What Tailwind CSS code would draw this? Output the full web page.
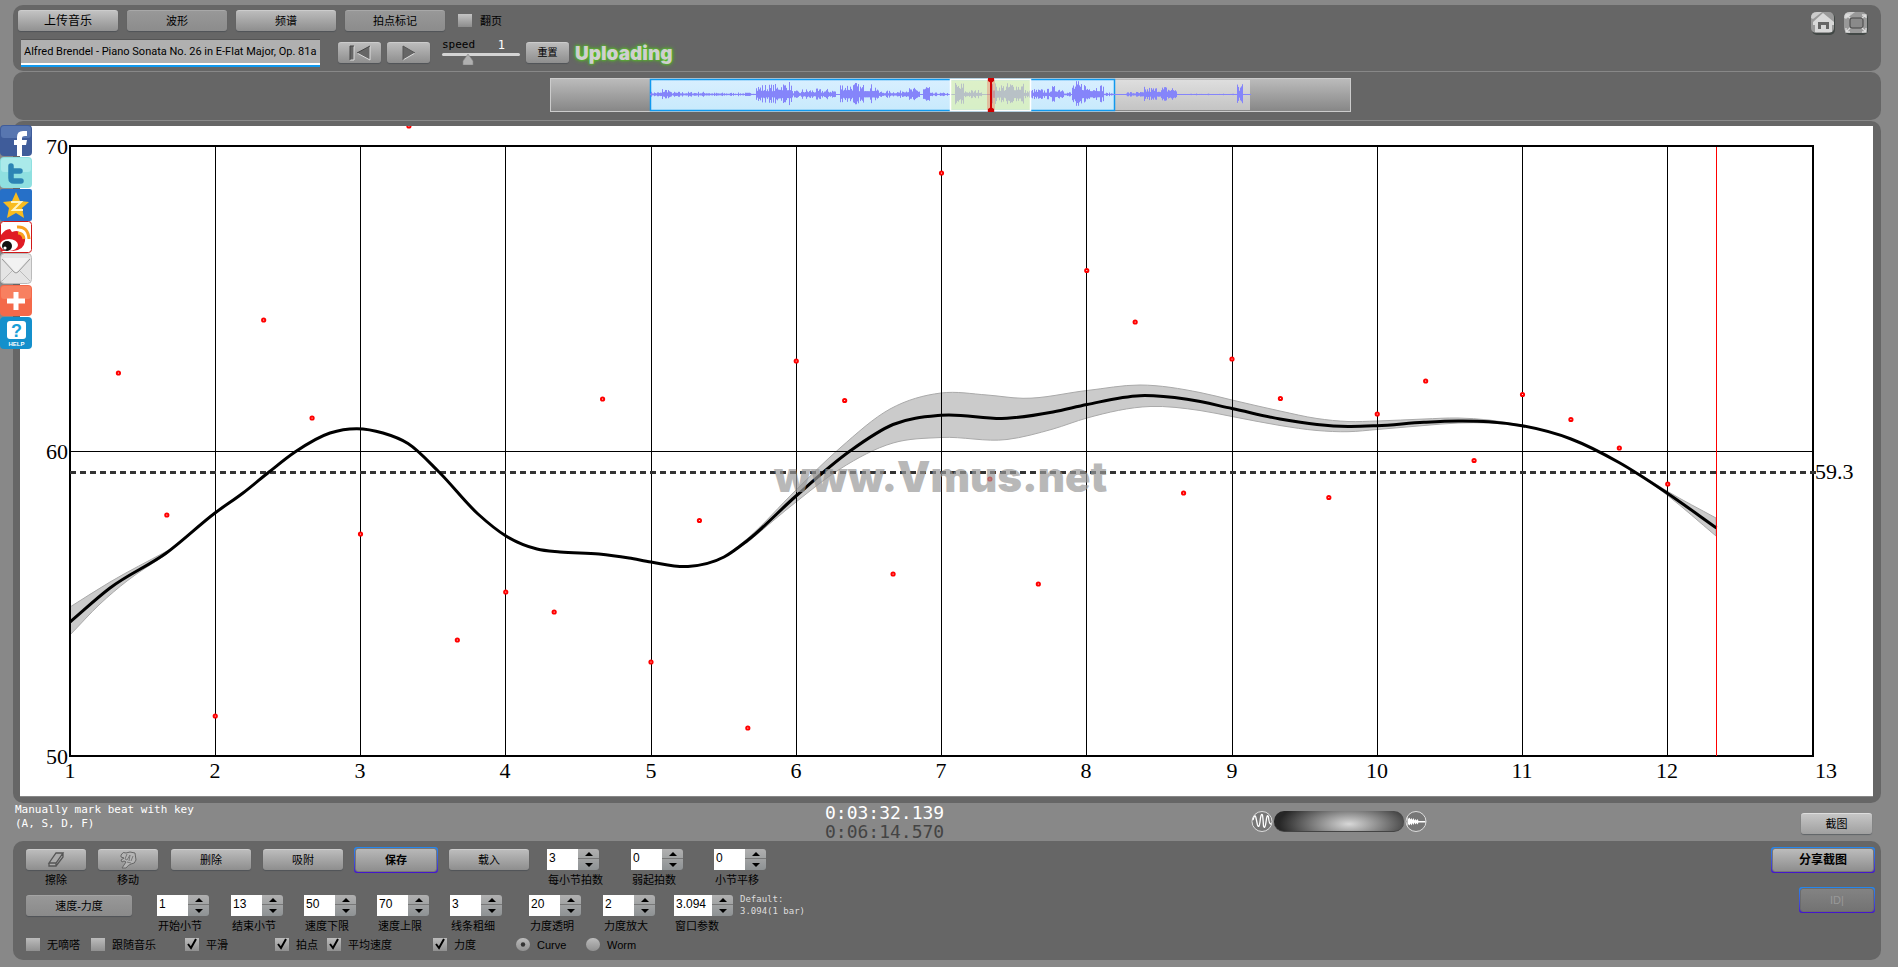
<!DOCTYPE html>
<html lang="zh-CN">
<head>
<meta charset="utf-8">
<title>Vmus.net</title>
<script src="https://cdn.jsdelivr.net/npm/@tailwindcss/browser@4"></script>
</head>
<body class="relative min-h-screen bg-[#888888] pl-[13px] pr-[17px] pt-[5px] font-['Liberation_Sans','Noto_Sans_CJK_SC',sans-serif] text-[11px] leading-[14px] text-black">

<!-- Toolbar -->
<header class="flex h-[66px] justify-between rounded-[10px] bg-[#666666] pl-[5px] pr-[12px] pt-[5px]">
  <div class="flex flex-col gap-[8px]">
    <div class="flex items-center gap-[9px]">
      <button class="h-[21px] w-[100px] rounded-[3px] border-t border-[#cccccc] bg-linear-to-b from-[#c2c2c2] to-[#919191] text-[12px] shadow-[0_1px_1px_#505458]">上传音乐</button>
      <button class="h-[21px] w-[100px] rounded-[3px] border-t border-[#a8a8a8] bg-linear-to-b from-[#989898] to-[#8c8c8c] shadow-[0_1px_1px_#505458]">波形</button>
      <button class="h-[21px] w-[100px] rounded-[3px] border-t border-[#cccccc] bg-linear-to-b from-[#bcbcbc] to-[#8e8e8e] shadow-[0_1px_1px_#505458]">频谱</button>
      <button class="h-[21px] w-[100px] rounded-[3px] border-t border-[#a8a8a8] bg-linear-to-b from-[#989898] to-[#8c8c8c] shadow-[0_1px_1px_#505458]">拍点标记</button>
      <label class="ml-[4px] flex items-center gap-[8px]"><input type="checkbox" class="h-[13px] w-[14px] appearance-none bg-linear-to-b from-[#c4c4c4] to-[#8c8c8c]">翻页</label>
    </div>
    <div class="flex items-start pl-[3px]">
      <div class="w-[299px] border-b-2 border-[#1199ee]">
        <input aria-label="曲目" value="Alfred Brendel - Piano Sonata No. 26 in E-Flat Major, Op. 81a" class="block h-[26px] w-full border-b-2 border-t border-b-white border-t-[#555555] bg-[#b0b0b0] px-[3px] font-['Roboto',sans-serif] text-[11px]">
      </div>
      <button aria-label="回到开头" class="ml-[18px] mt-[3px] flex h-[21px] w-[43px] items-center justify-center rounded-[3px] border-t border-[#cccccc] bg-linear-to-b from-[#bcbcbc] to-[#8e8e8e] shadow-[0_1px_1px_#505458]">
        <svg class="h-[16px] w-[22px]" viewBox="0 0 22 16"><path d="M1 1h4v14H1zM21 1v14L8 8z" fill="#666"/><path d="M5 1v14H1M21 1v14L8 8" fill="none" stroke="#ddd"/><path d="M1 15V1h4M8 8l13-7" fill="none" stroke="#444"/></svg>
      </button>
      <button aria-label="播放" class="ml-[6px] mt-[3px] flex h-[21px] w-[43px] items-center justify-center rounded-[3px] border-t border-[#cccccc] bg-linear-to-b from-[#bcbcbc] to-[#8e8e8e] shadow-[0_1px_1px_#505458]">
        <svg class="h-[16px] w-[14px]" viewBox="0 0 14 16"><path d="M1 1v14l12-7z" fill="#666"/><path d="M1 15l12-7" fill="none" stroke="#ddd"/><path d="M1 15V1l12 7" fill="none" stroke="#555"/></svg>
      </button>
      <div class="ml-[12px] w-[78px] font-['DejaVu_Sans_Mono',monospace]">
        <div class="flex h-[12px] items-center justify-between pr-[15px]"><label for="speed">speed</label><span class="text-[12px] text-white">1</span></div>
        <div class="relative h-[14px]">
          <input id="speed" type="range" min="0" max="3" value="1" class="absolute inset-x-0 top-[2px] h-[3px] w-full appearance-none rounded bg-[#d4d4d4] [&::-webkit-slider-thumb]:appearance-none">
          <svg class="pointer-events-none absolute left-[20px] top-[3px] h-[11px] w-[12px]" viewBox="0 0 12 11"><path d="M6 0l5 7v4H1V7z" fill="#b0b0b0" stroke="#888" stroke-width=".6"/></svg>
        </div>
      </div>
      <button class="ml-[6px] mt-[3px] h-[21px] w-[43px] rounded-[3px] border-t border-[#cccccc] bg-linear-to-b from-[#bcbcbc] to-[#8e8e8e] text-[10px] shadow-[0_1px_1px_#505458]">重置</button>
      <span class="ml-[6px] mt-[5px] font-['Inter',sans-serif] text-[19px] font-black leading-[20px] text-[#cfcfcf] [text-shadow:0_0_2px_#55cc22,0_0_3px_#55bb22,0_0_5px_#55bb22]">Uploading</span>
    </div>
  </div>
  <nav class="flex gap-[7px] pt-[1px]">
    <a href="#" aria-label="主页"><svg class="h-[25px] w-[26px]" viewBox="0 0 26 25"><rect x="2" y="2" width="23" height="22" rx="5" fill="#424846"/><rect x="1" y="1" width="23" height="21" rx="5" fill="#999"/><path d="M1 7Q1 1 7 1h5L3 8z" fill="#ccc"/><path d="M13 2L3 11v3h2v7h17v-7h2v-3z" fill="#d8d8d8"/><path d="M8 11h11v7h-3v-4h-5v4H8z" fill="#666"/></svg></a>
    <a href="#" aria-label="全屏"><svg class="h-[25px] w-[26px]" viewBox="0 0 26 25"><rect x="2" y="2" width="23" height="22" rx="5" fill="#424846"/><rect x="1" y="1" width="23" height="21" rx="5" fill="#999"/><path d="M1 7Q1 1 7 1h5L3 8z" fill="#ccc"/><rect x="7" y="7" width="13" height="10" rx="2" fill="#8a8a8a" stroke="#444"/><path d="M3 7V4h4M19 4h4v3M23 17v4h-4M7 21H3v-4M3 4l4 3M23 4l-4 3M23 21l-4-4M3 21l4-4" fill="none" stroke="#ddd" stroke-width="1.300"/></svg></a>
  </nav>
</header>

<!-- Timeline overview -->
<section aria-label="时间轴" class="mt-px flex h-[48px] justify-center rounded-[10px] bg-[#666666] pl-[8px] pt-[6px]">
  <svg id="timeline" class="h-[35px] w-[802px]" viewBox="0 0 802 35">
    <defs>
      <linearGradient id="gd" x2="0" y2="1"><stop stop-color="#bcbcbc"/><stop offset="1" stop-color="#868686"/></linearGradient>
      <linearGradient id="gl" x2="0" y2="1"><stop stop-color="#dedede"/><stop offset="1" stop-color="#c4c4c4"/></linearGradient>
      <linearGradient id="gb" x2="0" y2="1"><stop stop-color="#d8efff"/><stop offset="1" stop-color="#c8eafc"/></linearGradient>
    </defs>
    <rect x=".5" y=".5" width="800" height="33" fill="url(#gd)" stroke="#ccc"/>
    <rect x="564" y="2" width="136" height="30" fill="url(#gl)"/>
    <rect x="100.500" y="1.500" width="464" height="31" fill="url(#gb)" stroke="#1199ee" stroke-width="1.500"/>
    <path id="wave" fill="none" stroke="#8585fa"/>
    <rect x="400.500" y="1.500" width="80" height="31" fill="#e1f29a" fill-opacity=".55" stroke="#fff" stroke-width="1.500"/>
    <rect x="437" y="1" width="8" height="33" fill="#f00" opacity=".2"/>
    <path d="M441 1v33" stroke="#d00000" stroke-width="2"/><path d="M438 0h6v3l-3 2-3-2zM438 34h6v-3l-3-2-3 2z" fill="#d00000"/>
  </svg>
</section>

<!-- Tempo chart -->
<main class="mt-px rounded-[10px] bg-[#666666] pb-[6px] pl-[7px] pr-[8px] pt-[5px]">
  <svg id="chart" class="block w-full border-b border-[#888888] bg-white font-['Liberation_Serif',serif] text-[22px]" viewBox="20 126 1853 670" role="img" aria-label="速度曲线">
    <path id="band" fill="#cbcbcb" stroke="#aaa"/>
    <g id="grid" stroke="#000" stroke-width="1"></g>
    <rect x="70" y="146" width="1743" height="610" fill="none" stroke="#000" stroke-width="2"/>
    <path d="M70 472.500H1820" stroke="#333" stroke-width="3" stroke-dasharray="6 4"/>
    <path id="curve" fill="none" stroke="#000" stroke-width="3"/>
    <g id="dots" fill="#fff" stroke="#f00" stroke-width="2"></g>
    <text x="774" y="492" class="font-['Inter',sans-serif] text-[42px] font-black" fill="#999" fill-opacity=".7">www.Vmus.net</text>
    <path d="M1716.500 147v609" stroke="#f00"/>
    <g text-anchor="end"><text x="68" y="154">70</text><text x="68" y="459">60</text><text x="68" y="764">50</text></g>
    <text x="1815" y="479">59.3</text>
    <g id="ticks" text-anchor="middle"></g>
  </svg>
</main>

<!-- Status strip -->
<section class="flex h-[38px] justify-between pl-[2px] pr-[9px]">
  <p class="w-[810px] font-['DejaVu_Sans_Mono',monospace] text-[11px] leading-[14px] text-white">Manually mark beat with key<br>(A, S, D, F)</p>
  <div class="w-[426px] shrink-0 font-['DejaVu_Sans_Mono',monospace] text-[18px] leading-[19px]"><div class="text-white">0:03:32.139</div><div class="text-[#444444]">0:06:14.570</div></div>
  <div class="flex flex-1 items-start pt-[7px]">
    <svg class="h-[23px] w-[22px]" viewBox="0 0 22 23"><circle cx="11" cy="11.500" r="10" fill="#777" stroke="#ddd"/><path d="M2 10Q4 3 5 8L6.500 15Q8 19 9 12Q10 2 11.500 5Q12 8 12.500 16Q14 20 15 12Q16 3 17.500 7Q18 14 20 14" fill="none" stroke="#fff" stroke-width="1.300"/></svg>
    <div class="mx-px mt-px h-[21px] w-[130px] rounded-[10px] border-b border-[#444444] bg-[radial-gradient(ellipse_70px_26px_at_75px_13px,#d8d8d8,#777777_55%,#262626)]"></div>
    <svg class="h-[23px] w-[22px]" viewBox="0 0 22 23"><circle cx="11" cy="11.500" r="10" fill="#777" stroke="#ddd"/><path d="M2.500 6l1 3 1-1.500 1 2 1-1.500 1 2 1-2 1 2.500 1-1.500 1 1.500 1-1.500 1 2h7v1.500h-7l-1 2-1-1.500-1 1.500-1-2-1 2.500-1-2-1 2.500-1-2-1 2-1-1.500-1 3z" fill="#fff"/></svg>
  </div>
  <button class="mt-[10px] h-[21px] w-[71px] rounded-[3px] border-t border-[#dddddd] bg-linear-to-b from-[#c6c6c6] to-[#a0a0a0] shadow-[0_1px_1px_#606468]">截图</button>
</section>

<!-- Controls -->
<section class="flex justify-between rounded-[10px] bg-[#666666] pb-[9px] pl-[13px] pr-[6px] pt-[6px]">
  <div class="pt-[2px]">
    <div id="row1" class="flex h-[46px]">
      <div class="w-[60px] text-center"><button aria-labelledby="l-erase" class="mb-[3px] flex h-[21px] w-[60px] items-center justify-center rounded-[3px] border-t border-[#cccccc] bg-linear-to-b from-[#bcbcbc] to-[#8e8e8e] shadow-[0_1px_1px_#505458]"><svg class="h-[16px] w-[18px]" viewBox="0 0 18 16"><path d="M2 11L9 1h7l-7 10zM2 11v3h7v-3M9 14l7-9V1M2 11h7" fill="#aaa" stroke="#555" stroke-width="1.300"/></svg></button><span id="l-erase">擦除</span></div>
      <div class="ml-[12px] w-[60px] text-center"><button aria-labelledby="l-move" class="mb-[3px] flex h-[21px] w-[60px] items-center justify-center rounded-[3px] border-t border-[#cccccc] bg-linear-to-b from-[#bcbcbc] to-[#8e8e8e] shadow-[0_1px_1px_#505458]"><svg class="h-[18px] w-[18px]" viewBox="0 0 18 18"><path d="M2 4Q4 0 7 2l4-1 5 1 1 7q-1 4-5 4-3 1-5 4H3l4-6-2-1-2 1-1-2 3-2-3-1z" fill="#b4b4b4" stroke="#666"/><path d="M8 3l-2 5 2 1 3-5M11 4l-1 6M14 5l-2 5M8 11l4 1" fill="none" stroke="#777"/></svg></button><span id="l-move">移动</span></div>
      <button class="ml-[13px] h-[21px] w-[80px] rounded-[3px] border-t border-[#cccccc] bg-linear-to-b from-[#bcbcbc] to-[#8e8e8e] shadow-[0_1px_1px_#505458]">删除</button>
      <button class="ml-[12px] h-[21px] w-[80px] rounded-[3px] border-t border-[#cccccc] bg-linear-to-b from-[#bcbcbc] to-[#8e8e8e] shadow-[0_1px_1px_#505458]">吸附</button>
      <div class="-mt-[2px] ml-[11px] h-[26px] w-[84px] rounded-[3px] bg-linear-to-b from-[#2288ee] to-[#4411cc] p-px"><button class="h-full w-full rounded-[3px] border border-[#777777] bg-linear-to-b from-[#b8b8b8] to-[#8e8e8e] font-bold">保存</button></div>
      <button class="ml-[11px] h-[21px] w-[80px] rounded-[3px] border-t border-[#cccccc] bg-linear-to-b from-[#bcbcbc] to-[#8e8e8e] shadow-[0_1px_1px_#505458]">载入</button>
    </div>
    <div id="row2" class="flex h-[43px]">
      <button class="h-[21px] w-[106px] rounded-[3px] border-t border-[#a4a4a4] bg-linear-to-b from-[#989898] to-[#8a8a8a] shadow-[0_1px_1px_#505458]">速度-力度</button>
    </div>
    <div id="row3" class="flex h-[13px] items-center"></div>
  </div>
  <div class="flex flex-col items-end gap-[14px]">
    <div class="h-[26px] w-[104px] rounded-[3px] bg-linear-to-b from-[#2288ee] to-[#4411cc] p-px"><button class="h-full w-full rounded-[3px] border border-[#777777] bg-linear-to-b from-[#bcbcbc] to-[#8e8e8e] text-[12px] font-bold">分享截图</button></div>
    <div class="h-[26px] w-[76px] rounded-[3px] bg-linear-to-b from-[#2288ee] to-[#4411cc] p-px"><button disabled class="h-full w-full rounded-[3px] border border-[#6c6c6c] bg-linear-to-b from-[#838383] to-[#737373] text-[#999999]">ID|</button></div>
  </div>
</section>

<!-- Share links -->
<nav aria-label="分享" class="absolute left-0 top-[125px] flex flex-col">
  <a href="#" aria-label="Facebook"><svg class="block h-[32px] w-[32px]" viewBox="0 0 32 32"><rect width="32" height="31" rx="4" fill="#3f5c9a"/><rect x="1" y="1" width="30" height="12" rx="3" fill="#5876b0"/><path d="M17 31V20h-3v-5h3v-3q0-6 6-6h4v5h-2q-3 0-3 2v2h5l-1 5h-4v11z" fill="#fff"/></svg></a>
  <a href="#" aria-label="Twitter"><svg class="block h-[32px] w-[32px]" viewBox="0 0 32 32"><rect width="32" height="31" rx="4" fill="#8fe0e0"/><rect x="1" y="1" width="30" height="14" rx="3" fill="#aaeaea"/><path d="M11 9v12q0 3 3 3h7M11 14h9" fill="none" stroke="#2c84b4" stroke-width="5.500" stroke-linecap="round" stroke-linejoin="round"/></svg></a>
  <a href="#" aria-label="QQ空间"><svg class="block h-[32px] w-[32px]" viewBox="0 0 32 32"><rect width="32" height="32" rx="2" fill="#2670c8"/><path d="M16 3l4 9 9 1-7 6 2 10-8-5-9 5 2-10-6-6 9-1z" fill="#f8bc20"/><path d="M11 13h10l-8 8h10" fill="none" stroke="#fff4c0" stroke-width="2"/></svg></a>
  <a href="#" aria-label="新浪微博"><svg class="block h-[32px] w-[32px]" viewBox="0 0 32 32"><rect x=".5" y=".5" width="31" height="31" rx="3" fill="#fff" stroke="#d01818"/><path d="M1 14q4-6 9-6l2 3q7-3 8 2 6 2 5 7-1 9-12 10H1z" fill="#e01c24"/><ellipse cx="9" cy="24" rx="9" ry="6" fill="#fff"/><circle cx="7" cy="25" r="5" fill="#111"/><circle cx="5" cy="27" r="1.600" fill="#fff"/><path d="M17 6q11-1 12 12M18 12q5 0 6 6" fill="none" stroke="#f8a020" stroke-width="3"/></svg></a>
  <a href="#" aria-label="邮件"><svg class="block h-[32px] w-[32px]" viewBox="0 0 32 32"><rect x=".5" y=".5" width="31" height="30" rx="4" fill="#e4e4e4" stroke="#bbb"/><path d="M3 5l13 15L29 5z" fill="#f2f2f2"/><path d="M2 28l11-11M30 28L19 17" fill="none" stroke="#bbb"/><path d="M2 6l12 13q2 2 4 0L30 6" fill="none" stroke="#999"/></svg></a>
  <a href="#" aria-label="更多"><svg class="block h-[32px] w-[32px]" viewBox="0 0 32 32"><rect width="32" height="31" rx="4" fill="#f4694a"/><rect x="1" y="1" width="30" height="13" rx="3" fill="#f88060"/><path d="M16 7v18M7 16h18" stroke="#fff" stroke-width="5"/></svg></a>
  <a href="#" aria-label="HELP"><svg class="block h-[32px] w-[32px] font-['Liberation_Sans',sans-serif] font-bold" viewBox="0 0 32 32"><rect width="32" height="32" rx="4" fill="#1490cc"/><rect x="7" y="4" width="19" height="18" rx="3" fill="#fff"/><text x="16.500" y="20" text-anchor="middle" font-size="18" fill="#18a0d8">?</text><text x="16.500" y="29" text-anchor="middle" font-size="6" fill="#fff">HELP</text></svg></a>
</nav>

<script>
// Number spinners: [id, value, label, column classes, input width class]
const spinner = ([id, value, label, gap, width]) => `
  <div class="${gap}">
    <div class="flex h-[21px]">
      <input id="${id}" value="${value}" class="${width} h-[21px] bg-white px-[2px] pb-[4px] text-[12px]">
      <div class="flex w-[21px] flex-col overflow-hidden rounded-r-[3px] bg-linear-to-b from-[#b0b0b0] to-[#8e9294]">
        <button aria-label="${label} +" class="flex h-[10px] items-center justify-center border-b border-[#777777]"><svg class="h-[4px] w-[8px]" viewBox="0 0 8 4"><path d="M0 4l4-4 4 4z"/></svg></button>
        <button aria-label="${label} -" class="flex h-[11px] items-center justify-center"><svg class="h-[4px] w-[8px]" viewBox="0 0 8 4"><path d="M0 0l4 4 4-4z"/></svg></button>
      </div>
    </div>
    <label for="${id}" class="mt-[3px] block w-[52px] whitespace-nowrap pl-px">${label}</label>
  </div>`;
document.getElementById('row1').insertAdjacentHTML('beforeend', [
  ['beats', '3', '每小节拍数', 'ml-[18px] w-[52px]', 'w-[31px]'],
  ['pickup', '0', '弱起拍数', 'ml-[32px] w-[52px]', 'w-[31px]'],
  ['shift', '0', '小节平移', 'ml-[31px] w-[52px]', 'w-[31px]'],
].map(spinner).join(''));
document.getElementById('row2').insertAdjacentHTML('beforeend', [
  ['start', '1', '开始小节', 'ml-[25px] w-[52px]', 'w-[31px]'],
  ['end', '13', '结束小节', 'ml-[22px] w-[52px]', 'w-[31px]'],
  ['low', '50', '速度下限', 'ml-[21px] w-[52px]', 'w-[31px]'],
  ['high', '70', '速度上限', 'ml-[21px] w-[52px]', 'w-[31px]'],
  ['line', '3', '线条粗细', 'ml-[21px] w-[52px]', 'w-[31px]'],
  ['alpha', '20', '力度透明', 'ml-[27px] w-[52px]', 'w-[31px]'],
  ['gain', '2', '力度放大', 'ml-[22px] w-[52px]', 'w-[31px]'],
  ['window', '3.094', '窗口参数', 'ml-[19px] w-[59px]', 'w-[38px]'],
].map(spinner).join('') + `<p class="ml-[7px] -mt-[2px] whitespace-nowrap font-['DejaVu_Sans_Mono',monospace] text-[9px] leading-[12px] text-[#dddddd]">Default:<br>3.094(1 bar)</p>`);

// Options: [type, checked, label, width class]
const option = ([type, on, label, width]) => `
  <label class="${width} flex items-center gap-[7px] whitespace-nowrap">
    <span class="relative h-[13px] w-[14px]">
      <input type="${type}" ${type === 'radio' ? 'name="view"' : ''} ${on ? 'checked' : ''} class="block h-[13px] w-[14px] appearance-none bg-linear-to-b from-[#bcbcbc] to-[#909090] ${type === 'radio' ? 'rounded-full' : ''}">
      ${!on ? '' : type === 'radio'
        ? '<svg class="pointer-events-none absolute inset-0 h-[13px] w-[14px]" viewBox="0 0 14 13"><circle cx="7" cy="6.500" r="2.200" fill="#333"/></svg>'
        : '<svg class="pointer-events-none absolute inset-0 h-[13px] w-[14px]" viewBox="0 0 14 13"><path d="M3 6l3 4 5-9" fill="none" stroke="#000" stroke-width="2"/></svg>'}
    </span>${label}
  </label>`;
document.getElementById('row3').innerHTML = [
  ['checkbox', 0, '无嘀嗒', 'w-[65px]'],
  ['checkbox', 0, '跟随音乐', 'w-[94px]'],
  ['checkbox', 1, '平滑', 'w-[90px]'],
  ['checkbox', 1, '拍点', 'w-[52px]'],
  ['checkbox', 1, '平均速度', 'w-[106px]'],
  ['checkbox', 1, '力度', 'w-[83px]'],
  ['radio', 1, 'Curve', 'w-[70px]'],
  ['radio', 0, 'Worm', 'w-[70px]'],
].map(option).join('');

// Smooth path through points: cubic Hermite segments, slopes weighted by spacing
const smooth = p => {
  const chord = i => (p[i + 1][1] - p[i][1]) / (p[i + 1][0] - p[i][0]);
  const slope = p.map((q, i) => {
    if (i === 0) return chord(0);
    if (i === p.length - 1) return chord(i - 1);
    const h0 = Math.abs(q[0] - p[i - 1][0]), h1 = Math.abs(p[i + 1][0] - q[0]);
    return (chord(i - 1) * h1 + chord(i) * h0) / (h0 + h1);
  });
  let d = '';
  for (let i = 0; i < p.length - 1; i++) {
    const [x0, y0] = p[i], [x1, y1] = p[i + 1], t = (x1 - x0) / 3;
    d += `C${x0 + t} ${y0 + slope[i] * t} ${x1 - t} ${y1 - slope[i + 1] * t} ${x1} ${y1}`;
  }
  return d;
};
const area = (up, low) => 'M' + up[0] + smooth(up) + 'L' + low[0] + smooth(low) + 'Z';
const curve = [[70,622],[110,588],[167,552.500],[215,513],[243,493],[269,472],[295,452],[330,433],[357,428.700],[383,433],[408,443.500],[439,472],[478,514],[506,536],[537,549],[560,552],[599,554],[629,558],[651,562],[688,566.500],[724,557],[748,540],[796,496],[850,451],[893,424.500],[941,415.300],[1007,418.300],[1053,412],[1087,404.500],[1140,395.700],[1187,399.300],[1232,408.500],[1280,419],[1317,424.500],[1348,426.500],[1377,425.700],[1424,422.300],[1458,421],[1489,421.700],[1522,425.700],[1571,439],[1619,462.500],[1667,493],[1716.500,528]];
document.getElementById('curve').setAttribute('d', 'M' + curve[0] + smooth(curve));
document.getElementById('band').setAttribute('d',
  area([[70,607],[110,582],[167,551]], [[167,554],[127,581],[100,604],[70,635]]) +
  area([[724,557],[748,538],[796,490],[840,448],[890,409],[941,393],[987,395],[1023,398.300],[1087,390.500],[1140,385],[1200,392.500],[1232,400],[1280,411],[1317,418.500],[1348,421.500],[1377,421],[1424,419],[1458,418],[1489,420],[1522,425]],
       [[1522,426],[1489,423],[1458,423],[1424,425.500],[1377,429.500],[1348,431.700],[1317,430.500],[1280,425.500],[1232,416.500],[1200,410.500],[1150,406.500],[1087,418],[1053,429],[1007,439.500],[941,437.500],[893,443],[840,469],[796,502],[748,542]]) +
  area([[1640,474],[1667,491],[1716,518]], [[1716,536],[1667,495],[1640,475]]));

const step = 145.25;
let grid = '<path d="M70 451.500H1813"/>', ticks = '';
for (let n = 1; n <= 13; n++) {
  if (n > 1 && n < 13) grid += `<path d="M${Math.floor(70 + (n - 1) * step) + .5} 146V756"/>`;
  ticks += `<text x="${n === 13 ? 1826 : Math.round(69.5 + (n - 1) * step)}" y="778">${n}</text>`;
}
document.getElementById('grid').innerHTML = grid;
document.getElementById('ticks').innerHTML = ticks;
document.getElementById('dots').innerHTML = [373,515,716,320,418,534,126,640,592,612,399,662,520.500,728,361,400.500,574,173,479,584,270.500,322,493,359,398.500,497.500,414,381,460.500,394.500,419.500,448,484]
  .map((y, i) => `<circle cx="${70 + (i + 1) * step / 3}" cy="${y}" r="1.600"/>`).join('');

// Waveform: [from, to, amplitude]
let seed = 7, wave = 'M100 16.500H701';
const rnd = () => (seed = seed * 16807 % 2147483647) / 2147483647;
[[100,112,3],[112,120,7],[120,160,3],[160,206,2],[206,228,11],[228,242,14],[242,252,4],[252,286,6],[290,308,13],[308,328,11],[328,352,4],[352,370,7],[373,380,11],[380,399,2],[405,414,13],[414,432,5],[440,458,12],[458,474,14],[474,480,5],[481,500,6],[500,514,9],[514,521,3],[522,536,14],[536,554,11],[554,564,2],[576,594,3],[594,612,8],[612,627,9],[640,685,1],[687,693,12]]
  .forEach(([a, b, h]) => { for (let x = a; x < b; x++) { const r = rnd(), v = h * (.3 + .7 * r * r); wave += `M${x + .5} ${16.5 - v}V${16.5 + v * .85}`; } });
document.getElementById('wave').setAttribute('d', wave);
</script>
</body>
</html>
